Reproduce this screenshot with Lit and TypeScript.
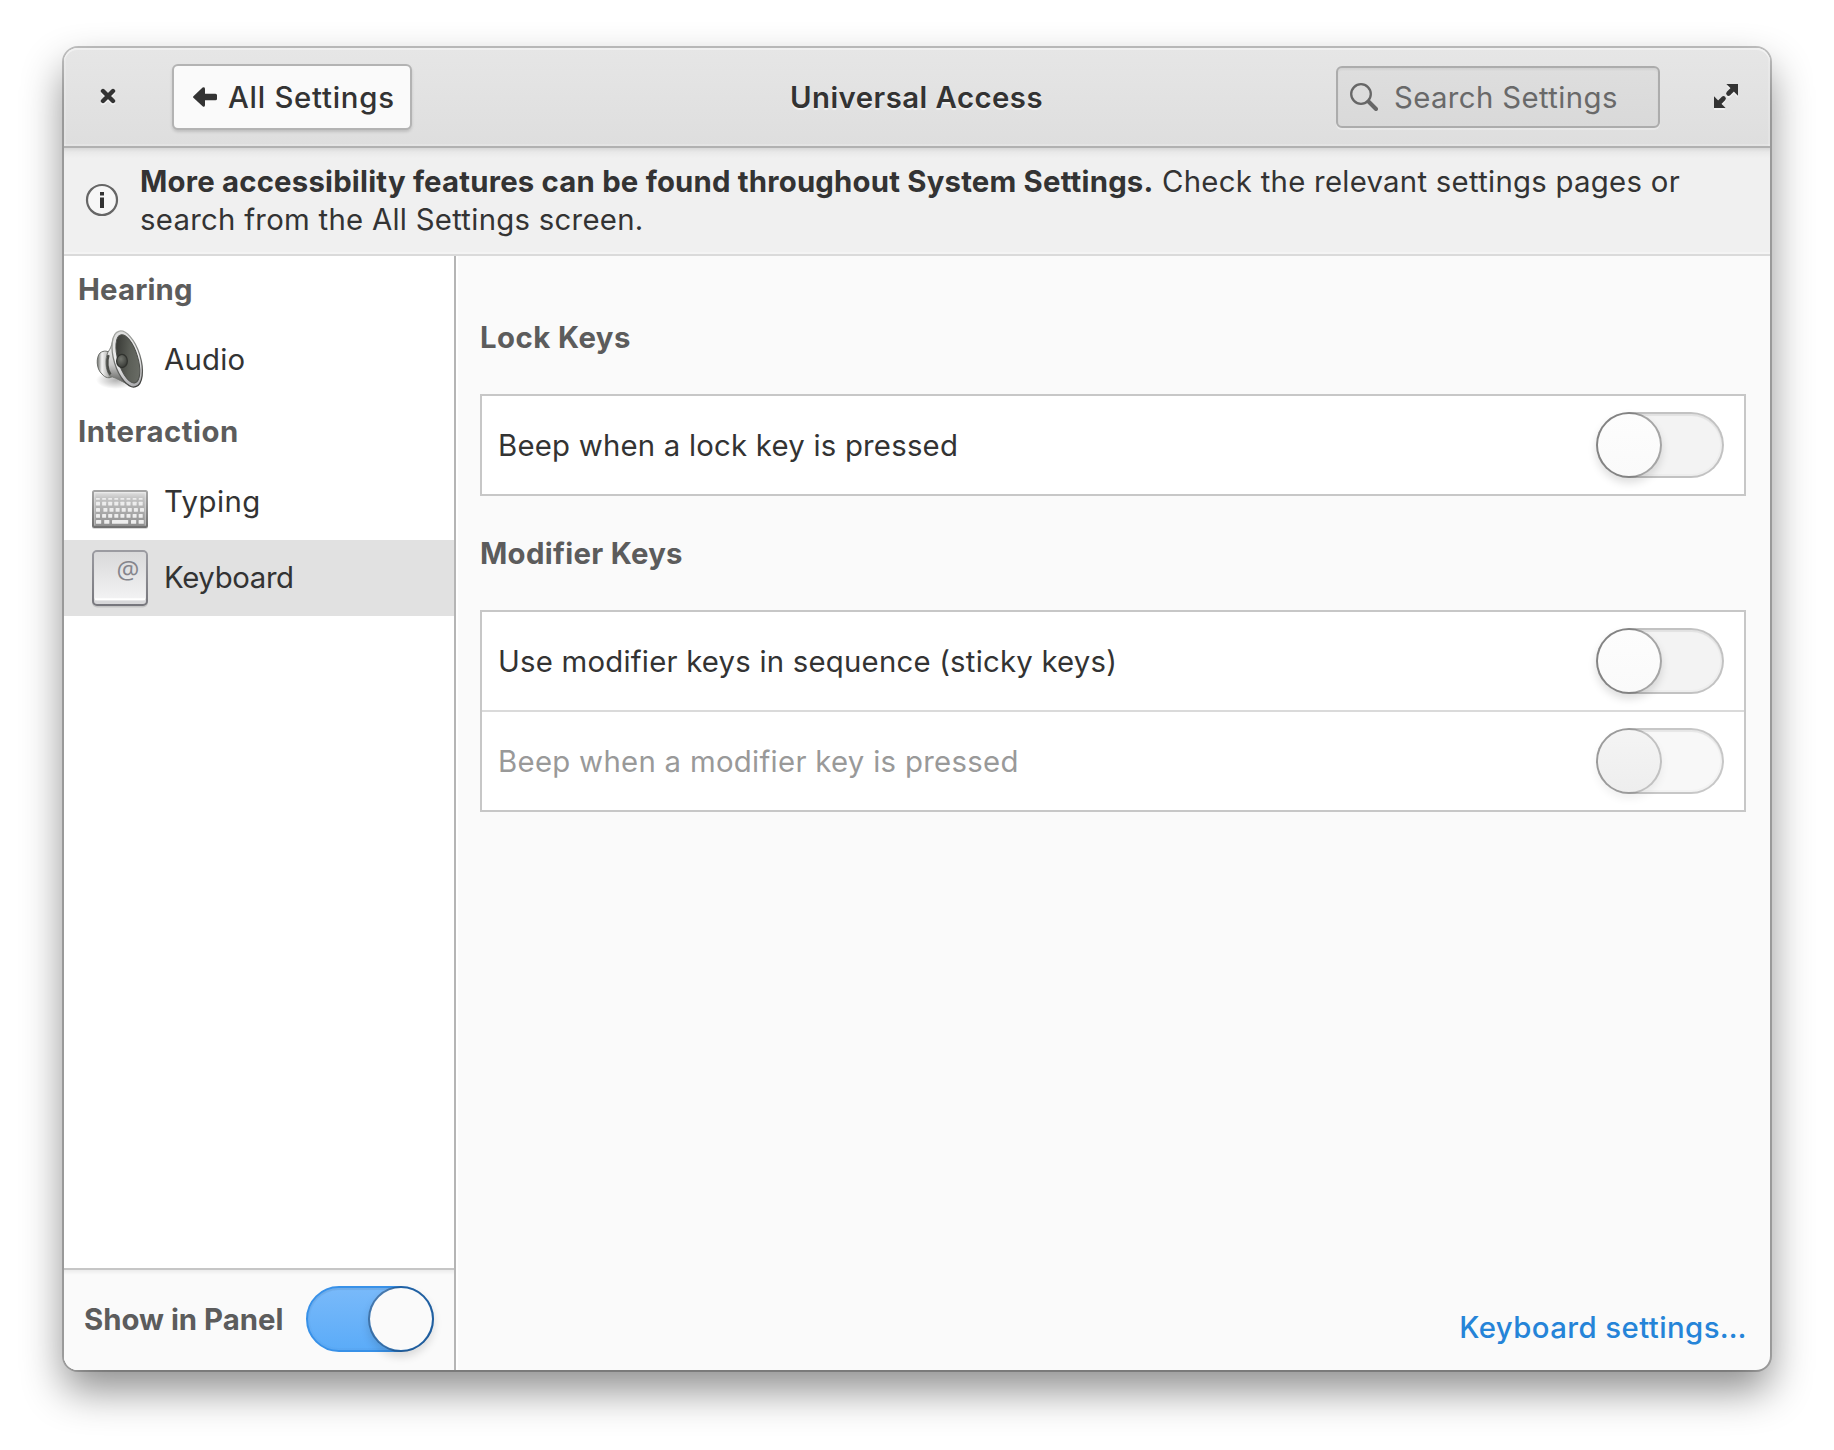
import { LitElement, html, css, svg } from "lit";
import { customElement, property, state } from "lit/decorators.js";
import { classMap } from "lit/directives/class-map.js";

@customElement("toggle-switch")
class ToggleSwitch extends LitElement {
  @property({ type: Boolean, reflect: true }) on = false;
  @property({ type: Boolean, reflect: true }) disabled = false;

  static styles = css`
    :host {
      display: block;
      flex: none;
    }
    .track {
      box-sizing: border-box;
      display: flex;
      justify-content: flex-start;
      width: 128px;
      height: 66px;
      border: 2px solid rgba(0, 0, 0, 0.24);
      border-radius: 33px;
      background: #f3f3f3 padding-box;
      box-shadow: inset 0 2px 1px rgba(0, 0, 0, 0.05), inset 0 0 0 2px rgba(0, 0, 0, 0.02);
    }
    .knob {
      box-sizing: border-box;
      width: 66px;
      height: 66px;
      margin: -2px;
      border: 2px solid rgba(0, 0, 0, 0.32);
      border-radius: 50%;
      background: linear-gradient(#fdfdfd, #fafafa) padding-box;
      box-shadow: 0 5px 9px rgba(0, 0, 0, 0.13);
    }
    .track.on {
      justify-content: flex-end;
      border-color: #3891e8;
      background: linear-gradient(#7abafa, #5aabf8) border-box;
    }
    .track.on .knob {
      border-color: rgba(0, 20, 50, 0.38);
      background: #fafafa padding-box;
    }
    .track.disabled {
      border-color: rgba(0, 0, 0, 0.22);
      background-color: #f8f8f8;
    }
    .track.disabled .knob {
      border-color: rgba(0, 0, 0, 0.22);
      background: linear-gradient(#f4f4f4, #eee) padding-box;
      box-shadow: 0 5px 9px rgba(0, 0, 0, 0.06);
    }
  `;

  render() {
    return html`<div
      role="switch"
      aria-checked=${this.on ? "true" : "false"}
      class=${classMap({ track: true, on: this.on, disabled: this.disabled })}
      @click=${() => { if (!this.disabled) this.on = !this.on; }}
    ><div class="knob"></div></div>`;
  }
}

const closeIcon = html`<svg width="16" height="16" viewBox="0 0 16 16">
  <path d="M3 3L13 13M13 3L3 13" stroke="#333" stroke-width="4.4" stroke-linecap="round" />
</svg>`;

const backIcon = html`<svg width="24" height="20" viewBox="0 0 24 20">
  <path d="M0.4 9.2L9.6 .6Q12 -.8 12 2V6.8H22.5Q24 6.8 24 8.3V11.7Q24 13.2 22.5 13.2H12V18Q12 20.8 9.6 19.3L.4 10.8Q-.3 10 .4 9.2Z" fill="#333" />
</svg>`;

const searchIcon = html`<svg width="28" height="28" viewBox="0 0 28 28" fill="none" stroke="#666">
  <circle cx="11" cy="11" r="9.8" stroke-width="2.3" />
  <path d="M18.5 18.5L26 26" stroke-width="4" stroke-linecap="round" />
</svg>`;

const expandIcon = html`<svg width="24" height="24" viewBox="0 0 24 24" fill="#333" stroke="#333">
  <path d="M12.4 0H24V11.8Z" stroke="none" />
  <path d="M0 12.2V24H11.6Z" stroke="none" />
  <path d="M19.5 4.5L14.5 9.5M4.5 19.5L9.5 14.5" stroke-width="4.6" stroke-linecap="round" />
</svg>`;

const infoIcon = html`<svg class="info-icon" width="34" height="34" viewBox="0 0 34 34">
  <circle cx="17" cy="17" r="15" fill="#f7f7f7" stroke="#666" stroke-width="2.2" />
  <path d="M15 9H19V12.4H15ZM15 14.4H19V25H15Z" fill="#333" />
</svg>`;

const speakerIcon = html`<svg width="64" height="64" viewBox="0 0 64 64">
  <defs>
    <linearGradient id="metal" x1="0" y1="0" x2="0" y2="1">
      <stop offset="0" stop-color="#8d8f8a" /><stop offset=".25" stop-color="#f2f2f1" />
      <stop offset=".6" stop-color="#c9c9c8" /><stop offset="1" stop-color="#4a4b48" />
    </linearGradient>
    <linearGradient id="magnet" x1="0" y1="0" x2="1" y2="0">
      <stop offset="0" stop-color="#6a6c68" /><stop offset=".3" stop-color="#f4f4f4" />
      <stop offset=".65" stop-color="#bdbdbb" /><stop offset="1" stop-color="#555652" />
    </linearGradient>
    <linearGradient id="rim" x1="0" y1="0" x2="0" y2="1">
      <stop offset="0" stop-color="#dcdcdb" /><stop offset=".5" stop-color="#f0f0f0" />
      <stop offset="1" stop-color="#a9a9ac" />
    </linearGradient>
    <linearGradient id="rimEdge" x1="0" y1="0" x2="0" y2="1">
      <stop offset="0" stop-color="#a8aaa6" /><stop offset="1" stop-color="#3c3d3b" />
    </linearGradient>
    <linearGradient id="cone" x1="0" y1="0" x2="1" y2="1">
      <stop offset="0" stop-color="#2c2d2a" /><stop offset=".55" stop-color="#5c5f58" />
      <stop offset="1" stop-color="#6f726b" />
    </linearGradient>
    <radialGradient id="cap" cx=".4" cy=".35" r=".7">
      <stop offset="0" stop-color="#73766f" /><stop offset="1" stop-color="#363834" />
    </radialGradient>
    <radialGradient id="floor">
      <stop offset="0" stop-color="#000" stop-opacity=".3" /><stop offset="1" stop-color="#000" stop-opacity="0" />
    </radialGradient>
  </defs>
  <ellipse cx="28" cy="52" rx="20" ry="9" fill="url(#floor)" />
  <path d="M12 25C16 22 20 23 22 25L25 48C22 51 17 50 14 46C8 41 8 29 12 25Z" fill="url(#magnet)" stroke="#6d6f6b" stroke-width="1" />
  <path d="M20 24C25 18 24 10 28 5L44 58C36 55 29 50 22 48C17 42 17 30 20 24Z" fill="url(#metal)" stroke="#777975" stroke-width="1" />
  <path d="M20.5 27C18.5 33 19 42 22.5 46.5" fill="none" stroke="#4b4d49" stroke-width="2.4" />
  <g transform="translate(39.2 31) rotate(-17)">
    <ellipse rx="13.2" ry="29" fill="url(#rim)" stroke="url(#rimEdge)" stroke-width="1.3" />
    <ellipse cx=".7" rx="9.9" ry="25" fill="url(#cone)" stroke="#4d4f4b" stroke-width="1" />
  </g>
  <ellipse cx="34" cy="33" rx="5.4" ry="6.6" fill="url(#cap)" stroke="#30322e" stroke-width="1.2" />
</svg>`;

const keyRow = (y: number, h: number, xs: number[], w: number) =>
  xs.map((x) => svg`<rect x=${x} y=${y} width=${w} height=${h} rx=".5" fill="#ededed" />`);
const columns = (start: number, count: number) => Array.from({ length: count }, (_, i) => start + i * 6.1);

const typingIcon = html`<svg width="64" height="64" viewBox="0 0 64 64">
  <defs>
    <linearGradient id="case" x1="0" y1="0" x2="0" y2="1">
      <stop offset="0" stop-color="#e6e6e6" /><stop offset=".2" stop-color="#c4c4c4" />
      <stop offset="1" stop-color="#8c8c8c" />
    </linearGradient>
    <linearGradient id="caseEdge" x1="0" y1="0" x2="0" y2="1">
      <stop offset="0" stop-color="#a6a6a6" /><stop offset="1" stop-color="#707070" />
    </linearGradient>
  </defs>
  <rect x="4" y="22" width="56" height="37" rx="2" fill="#000" opacity=".15" />
  <rect x="5" y="21" width="54" height="36" rx="1.5" fill="url(#case)" stroke="url(#caseEdge)" stroke-width="2" />
  <path d="M6.7 55.5V22.7H57.3V55.5" fill="none" stroke="#fff" stroke-opacity=".35" stroke-width="1.2" />
  ${keyRow(28, 1.8, columns(8, 8), 3.9)}
  ${keyRow(31.8, 3.8, columns(8, 8), 4)}
  ${keyRow(38, 3.8, [8, ...columns(15.4, 7)], 4)}
  ${keyRow(44, 3.8, columns(8, 8), 4)}
  ${keyRow(50, 3.8, [8, 16.2, 43, 50.6], 5.2)}
  <rect x="24" y="50" width="16.2" height="3.8" rx=".5" fill="#ededed" />
</svg>`;

const keycapIcon = html`<svg width="64" height="64" viewBox="0 0 64 64">
  <defs>
    <linearGradient id="key" x1="0" y1="0" x2="0" y2="1">
      <stop offset="0" stop-color="#d9d9da" /><stop offset="1" stop-color="#f3f3f4" />
    </linearGradient>
    <linearGradient id="keyEdge" x1="0" y1="0" x2="0" y2="1">
      <stop offset="0" stop-color="#9b9ba1" /><stop offset="1" stop-color="#77777d" />
    </linearGradient>
  </defs>
  <rect x="4" y="6" width="56" height="55.4" rx="5" fill="#000" opacity=".12" />
  <rect x="5" y="5" width="54" height="54" rx="4" fill="#d8d8da" stroke="url(#keyEdge)" stroke-width="2" />
  <rect x="6.2" y="6.2" width="51.6" height="48" rx="3" fill="url(#key)" />
  <path d="M7 53.3H57" stroke="#fff" stroke-width="2" />
  <text class="at" x="40" y="33" text-anchor="middle">@</text>
</svg>`;

interface Setting { label: string; spacing: number; disabled?: boolean }
interface Group { title: string; spacing: number; settings: Setting[] }

@customElement("app-root")
class AppRoot extends LitElement {
  @state() private selected = "Keyboard";

  private groups: Group[] = [
    { title: "Lock Keys", spacing: 0.45, settings: [{ label: "Beep when a lock key is pressed", spacing: 0.22 }] },
    {
      title: "Modifier Keys",
      spacing: 0.3,
      settings: [
        { label: "Use modifier keys in sequence (sticky keys)", spacing: 0.22 },
        { label: "Beep when a modifier key is pressed", spacing: 0.3, disabled: true },
      ],
    },
  ];

  private categories = [
    { title: "Hearing", spacing: 0.15, items: [{ label: "Audio", spacing: 0.2, icon: speakerIcon }] },
    {
      title: "Interaction",
      spacing: 0.5,
      items: [
        { label: "Typing", spacing: 0.45, icon: typingIcon },
        { label: "Keyboard", spacing: -0.35, icon: keycapIcon },
      ],
    },
  ];

  static styles = css`
    :host {
      display: block;
      box-sizing: border-box;
      height: 1450px;
      padding: 48px 64px 80px;
      overflow: hidden;
      background: #fff;
      color: #333;
      font: 400 29.33px/38px Inter, "Open Sans", sans-serif;
      white-space: nowrap;
    }
    svg { display: block; flex: none; }
    .window {
      display: flex;
      flex-direction: column;
      height: 1322px;
      border-radius: 14px;
      background: #fafafa;
      box-shadow: 0 0 0 2px rgba(0, 0, 0, 0.23), 0 20px 42px rgba(0, 0, 0, 0.45);
    }
    .header {
      box-sizing: border-box;
      display: grid;
      grid-template-columns: 1fr auto 1fr;
      align-items: center;
      height: 100px;
      padding: 0 32px 2px 36px;
      border-bottom: 2px solid #b1b1b1;
      border-radius: 14px 14px 0 0;
      background: linear-gradient(#e6e6e6, #dedede);
      box-shadow: inset 0 2px rgba(255, 255, 255, 0.4), inset 0 -2px rgba(255, 255, 255, 0.2),
        inset 2px 0 rgba(255, 255, 255, 0.15), inset -2px 0 rgba(255, 255, 255, 0.15);
    }
    .start, .end { display: flex; align-items: center; }
    .end { justify-content: flex-end; gap: 54px; }
    .start { gap: 56px; }
    .icon-raised { filter: drop-shadow(0 2px 0 rgba(255, 255, 255, 0.5)); }
    .back {
      box-sizing: border-box;
      display: flex;
      align-items: center;
      gap: 11px;
      width: 240px;
      height: 66px;
      margin-top: 2px;
      padding: 0 0 0 19px;
      border: 2px solid #b3b3b3;
      border-radius: 6px;
      background: #fafafa;
      box-shadow: 0 2px 3px rgba(0, 0, 0, 0.14);
      font-weight: 500;
      letter-spacing: 0.75px;
    }
    .back-label { padding-top: 2px; }
    .title {
      padding: 4px 5px 0 0;
      font-weight: 600;
      letter-spacing: 0.47px;
      text-shadow: 0 2px 1px rgba(255, 255, 255, 0.6);
    }
    .search {
      box-sizing: border-box;
      display: flex;
      align-items: center;
      gap: 16px;
      width: 324px;
      height: 62px;
      margin-top: 2px;
      padding-left: 12px;
      border: 2px solid #acacac;
      border-radius: 6px;
      background: linear-gradient(#dedede, #d9d9d9);
      box-shadow: inset 0 2px 2px rgba(0, 0, 0, 0.05), 0 2px rgba(255, 255, 255, 0.3);
      color: #696969;
      letter-spacing: 0.4px;
    }
    .search-label { padding-top: 1px; }
    .info {
      box-sizing: border-box;
      display: flex;
      align-items: center;
      gap: 21px;
      height: 108px;
      padding: 0 22px 0 21px;
      border-bottom: 2px solid #dadada;
      background: linear-gradient(rgba(0, 0, 0, 0.1), rgba(0, 0, 0, 0.03) 4px, transparent 10px), #f0f0f0;
      box-shadow: inset 0 -2px #f4f4f4;
      letter-spacing: 0.28px;
    }
    .info-icon { margin-bottom: 2px; }
    .strong { font-weight: 700; letter-spacing: 0.2px; }
    .body { display: flex; flex: 1; min-height: 0; }
    .sidebar {
      box-sizing: border-box;
      display: flex;
      flex-direction: column;
      width: 392px;
      border-right: 2px solid #b5b5b5;
      border-radius: 0 0 0 14px;
      background: #fff;
    }
    .list { flex: 1; }
    .category { padding: 15px 14px 13px; color: #5c5c5c; font-weight: 700; }
    .item {
      display: flex;
      align-items: center;
      gap: 12px;
      height: 76px;
      padding-left: 24px;
    }
    .item.selected { background: #e1e1e1; }
    .at {
      fill: #85858c;
      font: 400 25.5px "Open Sans", sans-serif;
    }
    .actions {
      box-sizing: border-box;
      display: flex;
      align-items: center;
      justify-content: space-between;
      height: 102px;
      padding: 0 20px 2px;
      border-top: 2px solid #c6c6c6;
      border-radius: 0 0 0 14px;
      background: linear-gradient(rgba(0, 0, 0, 0.06), transparent 5px), #fafafa;
      color: #5c5c5c;
      font-weight: 700;
    }
    .actions-label { padding-top: 2px; }
    .content {
      box-sizing: border-box;
      display: flex;
      flex: 1;
      flex-direction: column;
      gap: 39px;
      padding: 63px 24px 23px;
      box-shadow: inset 2px 0 #fff;
    }
    .group { display: flex; flex-direction: column; gap: 37px; }
    .group-title { color: #5c5c5c; font-weight: 700; }
    .card { border: 2px solid #c7c7c7; background: #fff; }
    .setting {
      display: flex;
      align-items: center;
      justify-content: space-between;
      height: 98px;
      padding: 0 20px 0 16px;
    }
    .setting + .setting { border-top: 2px solid #dadada; }
    .setting.disabled { color: #999; }
    .setting-label { padding-top: 2px; }
    .link {
      margin: auto -1px 0 auto;
      color: #2584d8;
      font-weight: 500;
      letter-spacing: 0.43px;
    }
  `;

  render() {
    return html`
      <div class="window">
        <div class="header">
          <div class="start">
            <div class="icon-raised">${closeIcon}</div>
            <div class="back">${backIcon}<span class="back-label">All Settings</span></div>
          </div>
          <div class="title">Universal Access</div>
          <div class="end">
            <div class="search">${searchIcon}<span class="search-label">Search Settings</span></div>
            <div class="icon-raised">${expandIcon}</div>
          </div>
        </div>
        <div class="info">
          ${infoIcon}
          <div>
            <span class="strong">More accessibility features can be found throughout System Settings.</span>
            Check the relevant settings pages or<br />search from the All Settings screen.
          </div>
        </div>
        <div class="body">
          <div class="sidebar">
            <div class="list">
              ${this.categories.map((c) => html`
                <div class="category" style="letter-spacing:${c.spacing}px">${c.title}</div>
                ${c.items.map((i) => html`
                  <div
                    class=${classMap({ item: true, selected: i.label === this.selected })}
                    @click=${() => { this.selected = i.label; }}
                  >${i.icon}<span style="letter-spacing:${i.spacing}px">${i.label}</span></div>`)}
              `)}
            </div>
            <div class="actions"><span class="actions-label">Show in Panel</span><toggle-switch on></toggle-switch></div>
          </div>
          <div class="content">
            ${this.groups.map((g) => html`
              <div class="group">
                <div class="group-title" style="letter-spacing:${g.spacing}px">${g.title}</div>
                <div class="card">
                  ${g.settings.map((s) => html`
                    <div class=${classMap({ setting: true, disabled: !!s.disabled })}>
                      <span class="setting-label" style="letter-spacing:${s.spacing}px">${s.label}</span>
                      <toggle-switch ?disabled=${!!s.disabled}></toggle-switch>
                    </div>`)}
                </div>
              </div>`)}
            <div class="link">Keyboard settings…</div>
          </div>
        </div>
      </div>`;
  }
}
